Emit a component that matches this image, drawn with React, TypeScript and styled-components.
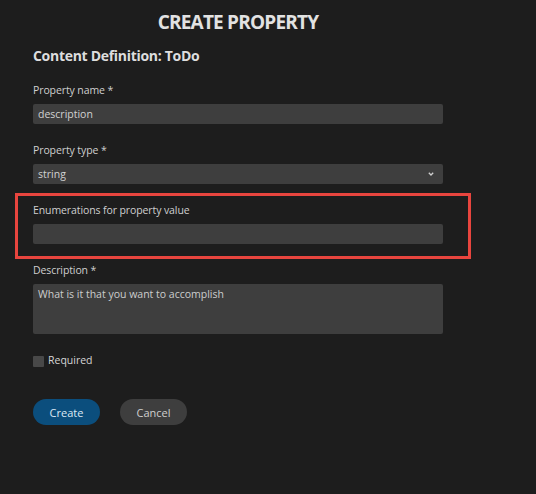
import React from 'react';
import styled, { createGlobalStyle } from 'styled-components';

const GlobalStyle = createGlobalStyle`
   html, body {
      margin: 0;
      padding: 0;
      background: #1d1d1d;
   }
   body {
      font-family: 'Open Sans', 'Noto Sans', sans-serif;
      color: #d2d2d2;
   }
   #root {
      min-height: 494px;
   }
`;

const App: React.FC = (): JSX.Element => {
   return (
      <>
         <GlobalStyle />
         <Page>
            <Title>CREATE PROPERTY</Title>
            <Heading>Content Definition: ToDo</Heading>
            <Form>
               <Field>
                  <Label>Property name *</Label>
                  <TextInput defaultValue='description' />
               </Field>
               <Field>
                  <Label>Property type *</Label>
                  <SelectBox>
                     <span>string</span>
                     <svg width='6' height='4' viewBox='0 0 6 4'>
                        <path d='M0.8 0.8 L3 3 L5.2 0.8' fill='none' stroke='#cfcfcf' strokeWidth='1.3' />
                     </svg>
                  </SelectBox>
               </Field>
               <Highlight>
                  <Field>
                     <Label>Enumerations for property value</Label>
                     <TextInput />
                  </Field>
               </Highlight>
               <Field>
                  <Label>Description *</Label>
                  <TextArea placeholder='What is it that you want to accomplish' />
               </Field>
               <CheckRow>
                  <CheckBox />
                  <span>Required</span>
               </CheckRow>
               <ButtonRow>
                  <Button primary>Create</Button>
                  <Button>Cancel</Button>
               </ButtonRow>
            </Form>
         </Page>
      </>
   );
};

const Page = styled.div`
   width: 410px;
   padding: 8px 0 0 33px;
`;

const Title = styled.h1`
   margin: 0;
   font-size: 19px;
   line-height: 28px;
   font-weight: 700;
   letter-spacing: -0.8px;
   text-align: center;
   color: #e2e2e2;
`;

const Heading = styled.h2`
   margin: 10px 0 0;
   font-size: 14px;
   line-height: 20px;
   font-weight: 700;
   letter-spacing: -0.3px;
   color: #dedede;
`;

const Form = styled.div`
   display: flex;
   flex-direction: column;
   gap: 19px;
   margin-top: 17px;
`;

const Field = styled.div`
   display: flex;
   flex-direction: column;
   gap: 7px;
`;

const Label = styled.label`
   font-size: 10.5px;
   line-height: 14px;
   letter-spacing: -0.1px;
   color: #cfcfcf;
`;

const fieldBox = `
   box-sizing: border-box;
   width: 100%;
   border: none;
   border-radius: 2px;
   background: #3e3e3e;
   color: #d2d2d2;
   font-family: 'Open Sans', 'Noto Sans', sans-serif;
   font-size: 10.5px;
   line-height: 14px;
   outline: none;
`;

const TextInput = styled.input.attrs({ type: 'text' })`
   ${fieldBox}
   height: 20px;
   padding: 0 5px;
`;

const SelectBox = styled.div`
   ${fieldBox}
   height: 20px;
   padding: 0 9px 0 5px;
   display: flex;
   align-items: center;
   justify-content: space-between;
`;

const TextArea = styled.textarea`
   ${fieldBox}
   height: 50px;
   padding: 3px 5px;
   resize: none;
   display: block;

   &::placeholder {
      color: #cdcdcd;
      opacity: 1;
   }
`;

const Highlight = styled.div`
   margin: -10px -28px -15px -18px;
   padding: 7px 25px 12px 15px;
   border: 3px solid #e8453e;
`;

const CheckRow = styled.div`
   display: flex;
   align-items: center;
   gap: 4px;
   font-size: 10.5px;
   line-height: 14px;
   color: #d6d6d6;
`;

const CheckBox = styled.span`
   width: 11px;
   height: 11px;
   margin-top: 2px;
   background: #484848;
   border-radius: 1px;
`;

const ButtonRow = styled.div`
   display: flex;
   gap: 20px;
   margin-top: 13px;
`;

const Button = styled.button.attrs({ type: 'button' })<{ primary?: boolean }>`
   min-width: 67px;
   height: 26px;
   padding: 0 16px;
   border: none;
   border-radius: 13px;
   background: ${({ primary }) => (primary ? '#0b4e7d' : '#3e3e3e')};
   color: ${({ primary }) => (primary ? '#dce9f4' : '#cfcfcf')};
   font-family: 'Open Sans', 'Noto Sans', sans-serif;
   font-size: 11px;
   cursor: pointer;
`;

export default App;
